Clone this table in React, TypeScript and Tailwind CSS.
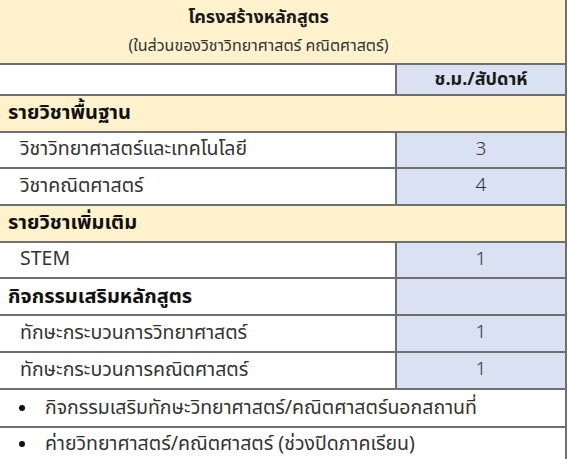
import React from "react";

const font = { fontFamily: '"Leelawadee UI", Tahoma, "Noto Sans Thai", "Noto Sans", "Liberation Sans", sans-serif' };

type Row =
  | { kind: "section"; text: string; blue?: boolean }
  | { kind: "item"; text: string; value: string }
  | { kind: "bullet"; text: string; last?: boolean };

const rows: Row[] = [
  { kind: "section", text: "รายวิชาพื้นฐาน" },
  { kind: "item", text: "วิชาวิทยาศาสตร์และเทคโนโลยี", value: "3" },
  { kind: "item", text: "วิชาคณิตศาสตร์", value: "4" },
  { kind: "section", text: "รายวิชาเพิ่มเติม" },
  { kind: "item", text: "STEM", value: "1" },
  { kind: "section", text: "กิจกรรมเสริมหลักสูตร", blue: true },
  { kind: "item", text: "ทักษะกระบวนการวิทยาศาสตร์", value: "1" },
  { kind: "item", text: "ทักษะกระบวนการคณิตศาสตร์", value: "1" },
  { kind: "bullet", text: "กิจกรรมเสริมทักษะวิทยาศาสตร์/คณิตศาสตร์นอกสถานที่" },
  { kind: "bullet", text: "ค่ายวิทยาศาสตร์/คณิตศาสตร์ (ช่วงปิดภาคเรียน)", last: true },
];

export default function App() {
  return (
    <div className="w-[569px] h-[459px] overflow-hidden bg-white" style={font}>
      <div className="w-[567px] border-r-2 border-[#6f6f6f]">
        <div className="h-[65px] bg-[#fff2cc] border-b-2 border-[#6f6f6f] flex flex-col items-center pt-[3px] pr-[48px]">
          <div className="text-[18px] font-bold text-[#1a1a1a] leading-[30px]">โครงสร้างหลักสูตร</div>
          <div className="text-[16px] text-[#333] leading-[26px]">(ในส่วนของวิชาวิทยาศาสตร์ คณิตศาสตร์)</div>
        </div>
        <div className="h-[31px] flex border-b-2 border-[#6f6f6f]">
          <div className="flex-1 bg-white" />
          <div className="w-[170px] bg-[#d9e1f2] border-l-2 border-[#6f6f6f] flex items-center justify-center text-[18px] font-bold text-[#1a1a1a]">
            ช.ม./สัปดาห์
          </div>
        </div>
        {rows.map((r, i) => {
          if (r.kind === "section") {
            return (
              <div key={i} className="h-[36.7px] flex border-b-2 border-[#6f6f6f] bg-[#fff2cc]">
                <div className={`flex-1 flex items-center pl-[8px] text-[20px] font-bold text-[#111] ${r.blue ? "bg-white" : ""}`}>{r.text}</div>
                {r.blue && <div className="w-[170px] bg-[#d9e1f2] border-l-2 border-[#6f6f6f]" />}
              </div>
            );
          }
          if (r.kind === "item") {
            return (
              <div key={i} className="h-[36.7px] flex border-b-2 border-[#6f6f6f]">
                <div className="flex-1 flex items-center pl-[20px] text-[19.5px] text-[#333] bg-white">{r.text}</div>
                <div className="w-[170px] bg-[#d9e1f2] border-l-2 border-[#6f6f6f] flex items-center justify-center text-[19px] font-light text-[#333]">
                  {r.value}
                </div>
              </div>
            );
          }
          return (
            <div
              key={i}
              className={r.last ? "h-[31px] flex items-center bg-white" : "h-[38.5px] flex items-center border-b-2 border-[#6f6f6f] bg-white"}
            >
              <div className="w-[45px] flex justify-center pr-[2px]">
                <span className="block w-[6px] h-[6px] rounded-full bg-[#111]" />
              </div>
              <div className="text-[19.5px] leading-[28px] text-[#333]">{r.text}</div>
            </div>
          );
        })}
      </div>
    </div>
  );
}
